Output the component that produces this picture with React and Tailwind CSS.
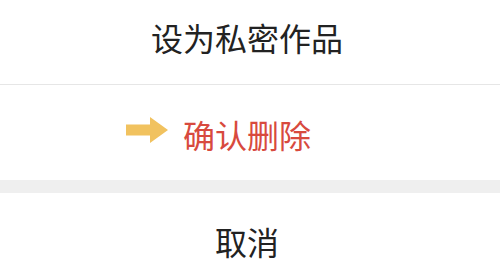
import React from 'react'

function Arrow() {
  return (
    <svg width="42" height="26" viewBox="0 0 42 26" className="absolute left-[126px] top-[32px]">
      <path d="M0 7.5 H24 V0 L42 13 L24 26 V18.5 H0 Z" fill="#f1c25f" />
    </svg>
  )
}

export default function App() {
  return (
    <div className="w-[500px] h-[280px] bg-white overflow-hidden font-['Noto_Sans_CJK_SC',sans-serif]">
      <div className="h-[84px] flex items-center justify-center pb-[10px] pr-[6px] text-[32px] text-[#222]">
        设为私密作品
      </div>
      <div className="h-px bg-[#e6e6e6]" />
      <div className="relative h-[95px] flex items-center justify-center pt-[2px] pr-[6px] text-[32px] text-[#d84a3e]">
        <Arrow />
        确认删除
      </div>
      <div className="h-[13px] bg-[#efefef]" />
      <div className="h-[100px] flex items-center justify-center pb-[5px] pr-[6px] text-[32px] text-[#222]">
        取消
      </div>
    </div>
  )
}
